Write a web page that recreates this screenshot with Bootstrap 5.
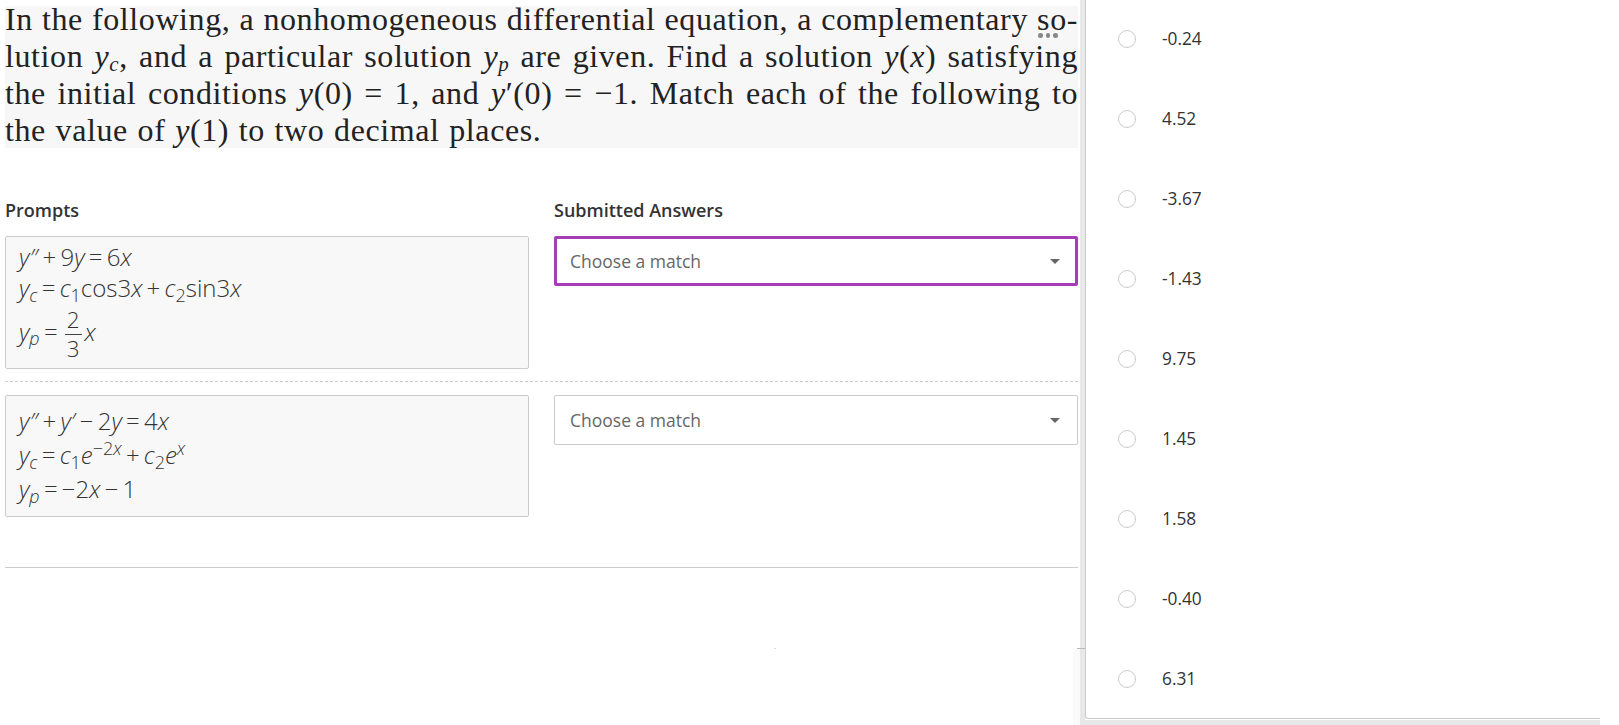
<!DOCTYPE html>
<html lang="en">

<head>
    <meta charset="UTF-8">
    <meta name="viewport" content="width=device-width, initial-scale=1.0">
    <title>Matching question</title>
    <link href="https://cdn.jsdelivr.net/npm/bootstrap@5.3.0/dist/css/bootstrap.min.css" rel="stylesheet">
    <style>
        body {
            font-family: 'Open Sans', sans-serif;
            background-color: #fff;
            color: #333;
            height: 725px;
            overflow: hidden;
        }

        .page-wrap {
            height: 725px;
            padding-right: 19px;
        }

        .main-col {
            width: 1080px;
            padding: 6px 2px 0 5px;
            flex: none;
        }

        /* question picture is typeset in a Computer Modern look */
        .question-text {
            background-color: #f7f7f7;
            height: 142px;
            font-family: 'Liberation Serif', serif;
            font-size: 32px;
            line-height: 27px;
            letter-spacing: .6px;
            color: #222;
            margin-bottom: 51px;
        }

        .q-line {
            text-align: justify;
            text-align-last: justify;
            white-space: nowrap;
            height: 37px;
        }

        .q-line.last-line {
            text-align-last: left;
            word-spacing: 1.1px;
        }

        .q-line sub {
            font-size: 21px;
            bottom: -.2em;
            font-style: italic;
        }

        .more-dots {
            position: absolute;
            left: 1038px;
            top: 33px;
            gap: 3px;
        }

        .more-dots i {
            width: 4.5px;
            height: 4.5px;
            border-radius: 50%;
            background-color: #888;
        }

        .col-head {
            font-size: 18px;
            font-weight: 600;
            line-height: 22px;
            margin-bottom: 15px;
        }

        .prompt-col {
            width: 524px;
            flex: none;
        }

        .answer-col {
            width: 524px;
            margin-left: 25px;
            flex: none;
        }

        .prompt-box {
            background-color: #f8f8f8;
            border: 1px solid #ccc;
            border-radius: 2px;
            padding: 4px 12px 5px 13px;
            color: #333;
            font-size: 24px;
            font-weight: 300;
            word-spacing: -2px;
            line-height: 31px;
        }

        .prompt-box.second {
            padding: 8px 12px 10px 13px;
            line-height: 34px;
        }

        .prompt-box sub,
        .prompt-box sup {
            font-size: 18px;
        }

        .frac-line {
            margin-top: 3px;
        }

        .frac {
            display: inline-flex;
            flex-direction: column;
            align-items: center;
            vertical-align: middle;
            line-height: 28px;
            margin: 0 3px;
            font-size: 22.4px;
        }

        .frac span:first-child {
            border-bottom: 1px solid #444;
            padding: 0 2px;
        }

        .match-btn {
            height: 50px;
            background-color: #fff;
            border: 1px solid #ccc;
            border-radius: 2px;
            color: #666;
            font-size: 17.5px;
            padding: 0 17px 0 15px;
        }

        .match-btn.is-focused {
            border: 3px solid #a63cb8;
            padding: 0 15px 0 13px;
        }

        .match-btn:hover {
            background-color: #fff;
            color: #666;
        }

        .row-split {
            border-top: 1px dashed #ccc;
            margin: 12px 0 13px;
        }

        .row-end {
            border-top: 1px solid #ccc;
            margin-top: 50px;
        }

        .side-panel {
            flex: 1;
            height: 725px;
            border-left: 5px solid #e8e8e8;
            border-bottom: 5px solid #e8e8e8;
            position: relative;
        }

        .panel-inner {
            height: 720px;
            border-left: 1px solid #ccc;
            border-bottom: 1px solid #ccc;
            border-bottom-left-radius: 3px;
            padding-left: 32px;
        }

        .opt-list {
            margin-top: -1px;
        }

        .opt-row {
            height: 80px;
            gap: 26px;
            font-size: 17.3px;
            color: #333;
        }

        .opt-row .form-check-input {
            width: 18px;
            height: 18px;
            margin: 0;
            border: 1px solid #ccc;
            flex: none;
        }

        .panel-tick {
            position: absolute;
            left: 1077px;
            top: 648px;
            width: 8px;
            border-top: 1px solid #bbb;
        }

        .panel-fade {
            position: absolute;
            left: 1073px;
            top: 649px;
            width: 7px;
            height: 76px;
            background-color: #fafafa;
            border-top-left-radius: 7px;
        }

        .speck {
            position: absolute;
            left: 774px;
            top: 648px;
            width: 2px;
            border-top: 1px solid #ddd;
        }
    </style>
</head>

<body>
    <div class="page-wrap d-flex">
        <div class="main-col">
            <div class="question-text">
                <div class="q-line">In the following, a nonhomogeneous differential equation, a complementary so-</div>
                <div class="q-line">lution <i>y<sub>c</sub></i>, and a particular solution <i>y<sub>p</sub></i> are given. Find a solution <i>y</i>(<i>x</i>) satisfying</div>
                <div class="q-line">the initial conditions <i>y</i>(0) = 1, and <i>y</i>&#8242;(0) = &minus;1. Match each of the following to</div>
                <div class="q-line last-line">the value of <i>y</i>(1) to two decimal places.</div>
            </div>
            <div class="more-dots d-flex"><i></i><i></i><i></i></div>

            <div class="d-flex">
                <div class="prompt-col col-head">Prompts</div>
                <div class="answer-col col-head">Submitted Answers</div>
            </div>

            <div class="d-flex align-items-start">
                <div class="prompt-col prompt-box">
                    <div><i>y&#8243;</i> + 9<i>y</i> = 6<i>x</i></div>
                    <div><i>y<sub>c</sub></i> = <i>c</i><sub>1</sub>cos3<i>x</i> + <i>c</i><sub>2</sub>sin3<i>x</i></div>
                    <div class="frac-line"><i>y<sub>p</sub></i> = <span class="frac"><span>2</span><span>3</span></span><i>x</i></div>
                </div>
                <div class="answer-col">
                    <button type="button" class="btn match-btn is-focused dropdown-toggle w-100 d-flex justify-content-between align-items-center">Choose a match</button>
                </div>
            </div>

            <div class="row-split"></div>

            <div class="d-flex align-items-start">
                <div class="prompt-col prompt-box second">
                    <div><i>y&#8243;</i> + <i>y&#8242;</i> &minus; 2<i>y</i> = 4<i>x</i></div>
                    <div><i>y<sub>c</sub></i> = <i>c</i><sub>1</sub><i>e</i><sup>&minus;2<i>x</i></sup> + <i>c</i><sub>2</sub><i>e<sup>x</sup></i></div>
                    <div><i>y<sub>p</sub></i> = &minus;2<i>x</i> &minus; 1</div>
                </div>
                <div class="answer-col">
                    <button type="button" class="btn match-btn dropdown-toggle w-100 d-flex justify-content-between align-items-center">Choose a match</button>
                </div>
            </div>

            <div class="row-end"></div>
        </div>

        <div class="side-panel">
            <div class="panel-inner">
                <div class="opt-list">
                    <div class="opt-row d-flex align-items-center"><input class="form-check-input" type="radio" name="opt"><span>-0.24</span></div>
                    <div class="opt-row d-flex align-items-center"><input class="form-check-input" type="radio" name="opt"><span>4.52</span></div>
                    <div class="opt-row d-flex align-items-center"><input class="form-check-input" type="radio" name="opt"><span>-3.67</span></div>
                    <div class="opt-row d-flex align-items-center"><input class="form-check-input" type="radio" name="opt"><span>-1.43</span></div>
                    <div class="opt-row d-flex align-items-center"><input class="form-check-input" type="radio" name="opt"><span>9.75</span></div>
                    <div class="opt-row d-flex align-items-center"><input class="form-check-input" type="radio" name="opt"><span>1.45</span></div>
                    <div class="opt-row d-flex align-items-center"><input class="form-check-input" type="radio" name="opt"><span>1.58</span></div>
                    <div class="opt-row d-flex align-items-center"><input class="form-check-input" type="radio" name="opt"><span>-0.40</span></div>
                    <div class="opt-row d-flex align-items-center"><input class="form-check-input" type="radio" name="opt"><span>6.31</span></div>
                </div>
            </div>
        </div>
    </div>

    <div class="panel-fade"></div>
    <div class="panel-tick"></div>
    <div class="speck"></div>

    <script src="https://cdn.jsdelivr.net/npm/bootstrap@5.3.0/dist/js/bootstrap.bundle.min.js"></script>
</body>

</html>
